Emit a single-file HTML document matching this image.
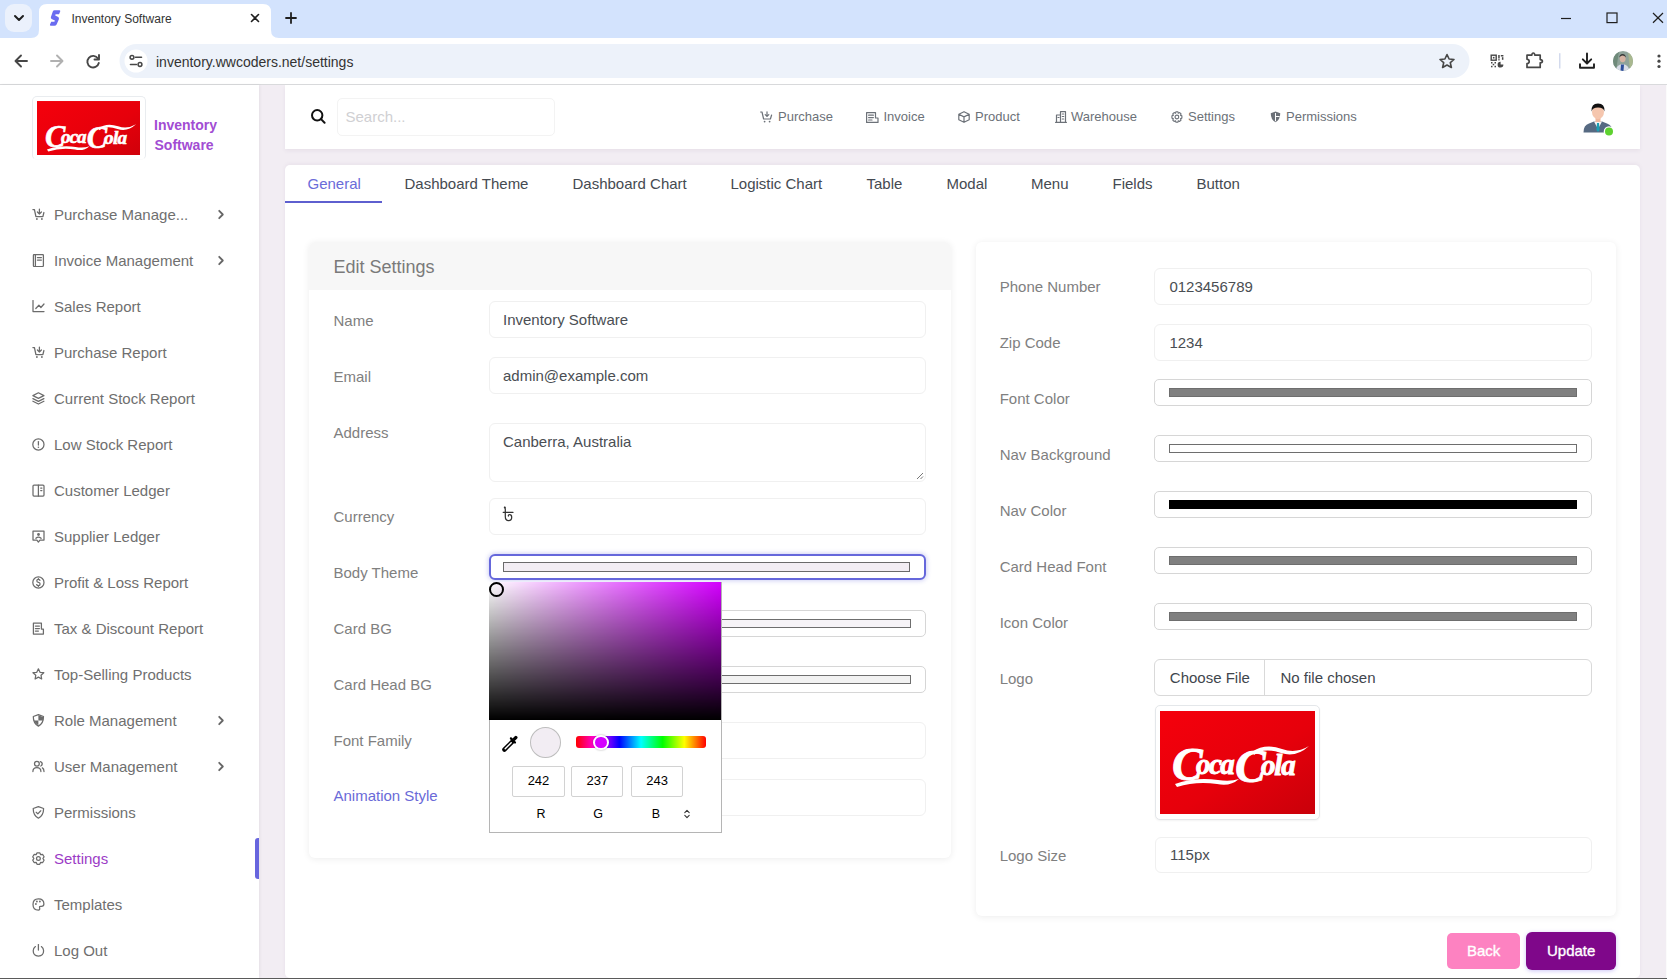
<!DOCTYPE html>
<html><head><meta charset="utf-8">
<style>
*{margin:0;padding:0;box-sizing:border-box}
html,body{width:1667px;height:979px;overflow:hidden;background:#fff;font-family:"Liberation Sans",sans-serif}
.a{position:absolute}
.t{position:absolute;white-space:nowrap}
/* chrome */
#strip{left:0;top:0;width:1667px;height:38px;background:#d3e3fd}
#toolbar{left:0;top:38px;width:1667px;height:46px;background:#fff}
#tbline{left:0;top:84px;width:1667px;height:1px;background:#d9dadc}
/* page */
#page{left:0;top:85px;width:1667px;height:893px;background:#f2edf3}
#side{left:0;top:85px;width:259px;height:893px;background:#fff;box-shadow:1px 0 3px rgba(0,0,0,.06)}
#botline{left:0;top:978px;width:1667px;height:1px;background:#5a5a5a}
.nav{position:absolute;left:0;width:259px;height:20px}
.nav .lb{position:absolute;left:54px;top:0;font-size:15px;line-height:15px;color:#6f6f6f;white-space:nowrap}
.nav svg{position:absolute;left:31px;top:0}
.nav .chev{position:absolute;left:216px;top:0}
.card{position:absolute;background:#fff;border-radius:6px}
.lbl{position:absolute;font-size:15px;line-height:15px;color:#808080;white-space:nowrap}
.inp{position:absolute;background:#fff;border:1px solid #f0f0f0;border-radius:6px}
.val{position:absolute;font-size:15px;line-height:15px;color:#4a4e53;white-space:nowrap}
.tab{position:absolute;top:176px;font-size:15px;line-height:15px;color:#454a51;white-space:nowrap}
.hn{position:absolute;top:110px;font-size:13px;line-height:13px;color:#6c7178;white-space:nowrap}
.cbar{position:absolute;border:1px solid #6e6e6e}
</style></head><body>
<svg width="0" height="0" style="position:absolute"><defs>
<linearGradient id="rg" x1="0" y1="0" x2="1" y2="1"><stop offset="0" stop-color="#f5000c"/><stop offset=".55" stop-color="#e6000b"/><stop offset="1" stop-color="#c9000a"/></linearGradient>
<symbol id="coke" viewBox="0 0 155 103">
<rect width="155" height="103" fill="url(#rg)"/>
<g fill="#fff" stroke="#fff" font-family="Liberation Serif" font-style="italic" font-weight="bold">
<text x="12" y="69" font-size="46" stroke-width="0.8">C</text>
<text x="36" y="63" font-size="29" stroke-width="0.9" letter-spacing="-1.5">oca</text>
<text x="75" y="71" font-size="46" stroke-width="0.8">C</text>
<text x="101" y="64" font-size="29" stroke-width="0.9" letter-spacing="-1.2">ola</text>
</g>
<path d="M15 73 Q35 66 58 69 Q70 71 79 68 Q70 76 57 73 Q36 70 17 76 Z" fill="#fff"/>
<path d="M92 41 Q105 32 122 38 Q136 43 149 35 Q136 47 121 42 Q104 36 94 44 Z" fill="#fff"/>
</symbol></defs></svg>

<!-- ============ CHROME ============ -->
<div id="strip" class="a"></div>
<div id="toolbar" class="a"></div>
<div id="tbline" class="a"></div>

<svg class="a" style="left:0;top:0" width="1667" height="85" viewBox="0 0 1667 85">
  <path d="M31 38 Q39 38 39 30 L39 12 Q39 4 47 4 L263 4 Q271 4 271 12 L271 30 Q271 38 279 38 Z" fill="#fff"/>
  <rect x="5" y="4" width="27" height="28" rx="9" fill="#ebf1fc"/>
  <path d="M15 16 L19 20 L23 16" fill="none" stroke="#1f1f1f" stroke-width="2" stroke-linecap="round" stroke-linejoin="round"/>
  <path d="M54.5 10.3 L59.6 10.3 Q60.6 10.5 60.2 11.6 L59 14.3 L55.6 14.3 L55.2 15.4 L58.2 17 Q59.4 17.8 58.8 19.4 L56.6 24.4 Q55.9 25.8 54.4 25.8 L50.6 25.8 Q49.6 25.6 50 24.6 L51.2 21.8 L54.4 21.8 L54.9 20.6 L51.6 19 Q50.4 18.2 51 16.8 L52.8 11.6 Q53.3 10.3 54.5 10.3 Z" fill="#6a6cf0"/>
  <path d="M251.5 14.5 L258.5 21.5 M258.5 14.5 L251.5 21.5" stroke="#1f1f1f" stroke-width="1.6" stroke-linecap="round"/>
  <path d="M291 13 L291 23 M286 18 L296 18" stroke="#1f1f1f" stroke-width="1.8" stroke-linecap="round"/>
  <!-- min max close -->
  <path d="M1561 18.5 L1571 18.5" stroke="#1f1f1f" stroke-width="1.2"/>
  <rect x="1607" y="13" width="10" height="9.6" fill="none" stroke="#1f1f1f" stroke-width="1.2"/>
  <path d="M1653 13 L1663 22.7 M1663 13 L1653 22.7" stroke="#1f1f1f" stroke-width="1.2"/>
  <!-- toolbar -->
  <path d="M27 61 L16 61 M21 55.5 L15.5 61 L21 66.5" fill="none" stroke="#474747" stroke-width="1.9" stroke-linecap="round" stroke-linejoin="round"/>
  <path d="M51 61 L62 61 M57 55.5 L62.5 61 L57 66.5" fill="none" stroke="#b1b1b1" stroke-width="1.9" stroke-linecap="round" stroke-linejoin="round"/>
  <path d="M98 58.5 A5.8 5.8 0 1 0 98.8 63" fill="none" stroke="#474747" stroke-width="1.9" stroke-linecap="round"/>
  <path d="M99 55 L99 59.5 L94.5 59.5" fill="none" stroke="#474747" stroke-width="1.9" stroke-linecap="round" stroke-linejoin="round"/>
  <rect x="119.5" y="44" width="1350" height="34" rx="17" fill="#edf2fa"/>
  <circle cx="136" cy="61" r="11.5" fill="#fff"/>
  <circle cx="132" cy="57.3" r="1.9" fill="none" stroke="#474747" stroke-width="1.5"/>
  <path d="M135.5 57.3 L141.5 57.3 M130.5 64.5 L136.5 64.5" stroke="#474747" stroke-width="1.6" stroke-linecap="round"/>
  <circle cx="140" cy="64.5" r="1.9" fill="none" stroke="#474747" stroke-width="1.5"/>
  <path d="M1447 54.5 L1449.1 59 L1454 59.5 L1450.3 62.7 L1451.4 67.5 L1447 65 L1442.6 67.5 L1443.7 62.7 L1440 59.5 L1444.9 59 Z" fill="none" stroke="#474747" stroke-width="1.6" stroke-linejoin="round"/>
  <!-- qr -->
  <g fill="#474747">
   <rect x="1491.2" y="55.2" width="5" height="5" fill="none" stroke="#474747" stroke-width="1.4"/>
   <rect x="1492.9" y="56.9" width="1.6" height="1.6"/>
   <rect x="1498.2" y="55" width="1.5" height="3.5"/><rect x="1500.8" y="55" width="2.6" height="1.5"/><rect x="1501.9" y="57.2" width="1.5" height="2.6"/><rect x="1498.2" y="59.2" width="1.5" height="1.2"/>
   <rect x="1491" y="62" width="1.5" height="1.5"/><rect x="1494.5" y="62" width="1.5" height="1.5"/><rect x="1492.7" y="63.8" width="1.5" height="1.5"/><rect x="1491" y="65.8" width="1.5" height="1.5"/><rect x="1494.5" y="65.8" width="1.5" height="1.5"/>
   <path d="M1500.6 61.8 L1500.6 64.6 L1503.4 64.6 A2.9 2.9 0 1 1 1500.6 61.8 Z"/>
  </g>
  <path d="M1527 55.2 L1531.8 55.2 Q1532 53 1533.3 53 Q1534.6 53 1534.8 55.2 L1540.2 55.2 L1540.2 59.6 Q1542.4 59.8 1542.4 61.2 Q1542.4 62.6 1540.2 62.8 L1540.2 67.4 L1527 67.4 L1527 63.6 Q1529.2 63.2 1529.2 61.4 Q1529.2 59.6 1527 59.2 Z" fill="none" stroke="#474747" stroke-width="1.7" stroke-linejoin="round"/>
  <rect x="1559.2" y="53.2" width="1.2" height="15.3" fill="#c9d1e9"/>
  <path d="M1587 53.5 L1587 63.2 M1582.8 59.3 L1587 63.5 L1591.2 59.3 M1580 64.2 L1580 67.8 L1594 67.8 L1594 64.2" fill="none" stroke="#1f1f1f" stroke-width="1.9" stroke-linecap="round" stroke-linejoin="round"/>
  <clipPath id="avc"><circle cx="1623" cy="61" r="10"/></clipPath>
  <g clip-path="url(#avc)">
   <rect x="1613" y="51" width="20" height="20" fill="#8fa39a"/>
   <path d="M1613 51 L1619 51 L1616 71 L1613 71 Z" fill="#6f8a7a"/>
   <path d="M1628 51 L1633 51 L1633 71 L1630 71 Z" fill="#a9b88f"/>
   <path d="M1615.5 71 Q1616.5 64.5 1622.5 64 Q1628.5 64.5 1629.5 71 Z" fill="#d9dde8"/>
   <path d="M1621 64.5 L1624 64.5 L1623.5 71 L1620.5 71 Z" fill="#2e4f9c"/>
   <ellipse cx="1622.6" cy="58.6" rx="3" ry="3.6" fill="#d6b3a3"/>
   <path d="M1619.4 57.5 Q1619.4 54 1622.6 54 Q1625.8 54 1625.8 57.5 Q1624.5 55.6 1622.6 55.6 Q1620.7 55.6 1619.4 57.5 Z" fill="#3a3a3a"/>
  </g>
  <circle cx="1659" cy="56" r="1.6" fill="#474747"/><circle cx="1659" cy="61.2" r="1.6" fill="#474747"/><circle cx="1659" cy="66.5" r="1.6" fill="#474747"/>
</svg>
<div class="t" style="left:71.5px;top:13px;font-size:12px;line-height:12px;color:#333">Inventory Software</div>
<div class="t" style="left:156px;top:54.5px;font-size:14px;line-height:14px;color:#333">inventory.wwcoders.net/settings</div>
<div id="page" class="a"></div>
<div id="side" class="a"></div>
<div class="a" style="left:31.5px;top:95.5px;width:114px;height:64px;border:1px solid #e9ecef;border-bottom-color:#fbfbfb;border-radius:5px;background:#fff"></div>
<div class="a" style="left:37px;top:101px;width:103px;height:54px;overflow:hidden"><svg class="a" style="left:0;top:0" width="103" height="68.5"><use href="#coke"/></svg></div>
<div class="t" style="left:154px;top:118px;font-size:14px;line-height:14px;font-weight:bold;color:#a24cd3">Inventory</div>
<div class="t" style="left:154.5px;top:137.8px;font-size:14px;line-height:14px;font-weight:bold;color:#a24cd3">Software</div>
<div class="nav" style="top:207.2px"><svg style="top:1.2px;left:31.6px" width="13" height="13" viewBox="0 0 12.2 13"><path d="M0.5 1.5 L2 1.5 L3.5 8.5 L10.5 8.5 L11.5 4.5" fill="none" stroke="#6b6b6b" stroke-width="1.25" stroke-linecap="round" stroke-linejoin="round"/><path d="M7 1 L7 6 M5 4 L7 6 L9 4" fill="none" stroke="#6b6b6b" stroke-width="1.25" stroke-linecap="round" stroke-linejoin="round"/><circle cx="4.5" cy="11" r=".9" fill="#6b6b6b"/><circle cx="9.5" cy="11" r=".9" fill="#6b6b6b"/></svg><div class="lb" style="color:#6f6f6f">Purchase Manage...</div><svg class="chev" style="left:217px;top:1.6px" width="8" height="11" viewBox="0 0 8 11"><path d="M2.2 1.8 L5.8 5.5 L2.2 9.2" fill="none" stroke="#666" stroke-width="1.8" stroke-linecap="round" stroke-linejoin="round"/></svg></div>
<div class="nav" style="top:253.2px"><svg style="top:1.2px;left:31.6px" width="13" height="13" viewBox="0 0 12.2 13"><rect x="1" y="0.5" width="10" height="12" rx="1" fill="none" stroke="#6b6b6b" stroke-width="1.25" stroke-linecap="round" stroke-linejoin="round"/><path d="M3 0.5 L3 12.5 M5 3.5 L9 3.5 M5 6 L9 6" fill="none" stroke="#6b6b6b" stroke-width="1.25" stroke-linecap="round" stroke-linejoin="round"/></svg><div class="lb" style="color:#6f6f6f">Invoice Management</div><svg class="chev" style="left:217px;top:1.6px" width="8" height="11" viewBox="0 0 8 11"><path d="M2.2 1.8 L5.8 5.5 L2.2 9.2" fill="none" stroke="#666" stroke-width="1.8" stroke-linecap="round" stroke-linejoin="round"/></svg></div>
<div class="nav" style="top:299.2px"><svg style="top:1.2px;left:31.6px" width="13" height="13" viewBox="0 0 12.2 13"><path d="M0.6 0.5 L0.6 11.5 L11.6 11.5" fill="none" stroke="#6b6b6b" stroke-width="1.25" stroke-linecap="round" stroke-linejoin="round"/><path d="M3.4 8.5 L6.5 5.2 L8.5 7.5 L11.6 4" fill="none" stroke="#6b6b6b" stroke-width="1.25" stroke-linecap="round" stroke-linejoin="round"/></svg><div class="lb" style="color:#6f6f6f">Sales Report</div></div>
<div class="nav" style="top:345.2px"><svg style="top:1.2px;left:31.6px" width="13" height="13" viewBox="0 0 12.2 13"><path d="M0.5 1.5 L2 1.5 L3.5 8.5 L10.5 8.5 L11.5 4.5" fill="none" stroke="#6b6b6b" stroke-width="1.25" stroke-linecap="round" stroke-linejoin="round"/><path d="M7 1 L7 6 M5 4 L7 6 L9 4" fill="none" stroke="#6b6b6b" stroke-width="1.25" stroke-linecap="round" stroke-linejoin="round"/><circle cx="4.5" cy="11" r=".9" fill="#6b6b6b"/><circle cx="9.5" cy="11" r=".9" fill="#6b6b6b"/></svg><div class="lb" style="color:#6f6f6f">Purchase Report</div></div>
<div class="nav" style="top:391.2px"><svg style="top:1.2px;left:31.6px" width="13" height="13" viewBox="0 0 12.2 13"><path d="M6 0.8 L11.5 3.6 L6 6.4 L0.5 3.6 Z" fill="none" stroke="#6b6b6b" stroke-width="1.25" stroke-linecap="round" stroke-linejoin="round"/><path d="M0.5 6.6 L6 9.4 L11.5 6.6 M0.5 9.2 L6 12 L11.5 9.2" fill="none" stroke="#6b6b6b" stroke-width="1.25" stroke-linecap="round" stroke-linejoin="round"/></svg><div class="lb" style="color:#6f6f6f">Current Stock Report</div></div>
<div class="nav" style="top:437.2px"><svg style="top:1.2px;left:31.6px" width="13" height="13" viewBox="0 0 12.2 13"><circle cx="6" cy="6.5" r="5.6" fill="none" stroke="#6b6b6b" stroke-width="1.25" stroke-linecap="round" stroke-linejoin="round"/><path d="M6 3.5 L6 7" fill="none" stroke="#6b6b6b" stroke-width="1.25" stroke-linecap="round" stroke-linejoin="round"/><circle cx="6" cy="9.2" r=".8" fill="#6b6b6b"/></svg><div class="lb" style="color:#6f6f6f">Low Stock Report</div></div>
<div class="nav" style="top:483.2px"><svg style="top:1.2px;left:31.6px" width="13" height="13" viewBox="0 0 12.2 13"><rect x="0.6" y="1" width="11" height="11" rx="1" fill="none" stroke="#6b6b6b" stroke-width="1.25" stroke-linecap="round" stroke-linejoin="round"/><path d="M6 1 L6 12 M8.3 4 L9.5 4 M8.3 6.5 L9.5 6.5" fill="none" stroke="#6b6b6b" stroke-width="1.25" stroke-linecap="round" stroke-linejoin="round"/></svg><div class="lb" style="color:#6f6f6f">Customer Ledger</div></div>
<div class="nav" style="top:529.2px"><svg style="top:1.2px;left:31.6px" width="13" height="13" viewBox="0 0 12.2 13"><path d="M0.6 1 L11.6 1 L11.6 10 L7.5 10 L6 12 L4.5 10 L0.6 10 Z" fill="none" stroke="#6b6b6b" stroke-width="1.25" stroke-linecap="round" stroke-linejoin="round"/><circle cx="6.1" cy="4.5" r="1.4" fill="#6b6b6b"/><path d="M3.5 8.3 Q6 5.8 8.7 8.3" fill="none" stroke="#6b6b6b" stroke-width="1.25" stroke-linecap="round" stroke-linejoin="round"/></svg><div class="lb" style="color:#6f6f6f">Supplier Ledger</div></div>
<div class="nav" style="top:575.2px"><svg style="top:1.2px;left:31.6px" width="13" height="13" viewBox="0 0 12.2 13"><circle cx="6" cy="6.5" r="5.6" fill="none" stroke="#6b6b6b" stroke-width="1.25" stroke-linecap="round" stroke-linejoin="round"/><path d="M7.6 4.3 Q7 3.4 6 3.4 Q4.4 3.4 4.4 4.8 Q4.4 6.2 6 6.4 Q7.7 6.6 7.7 8 Q7.7 9.6 6 9.6 Q4.8 9.6 4.3 8.6 M6 2.5 L6 3.4 M6 9.6 L6 10.5" fill="none" stroke="#6b6b6b" stroke-width="1.25" stroke-linecap="round" stroke-linejoin="round" stroke-width="1.1"/></svg><div class="lb" style="color:#6f6f6f">Profit &amp; Loss Report</div></div>
<div class="nav" style="top:621.2px"><svg style="top:1.2px;left:31.6px" width="13" height="13" viewBox="0 0 12.2 13"><path d="M9 4 L9 1 L1 1 L1 12 L11 12 L11 7 L9 7 Z" fill="none" stroke="#6b6b6b" stroke-width="1.25" stroke-linecap="round" stroke-linejoin="round"/><path d="M3 4 L7 4 M3 6.5 L7 6.5 M3 9 L6 9" fill="none" stroke="#6b6b6b" stroke-width="1.25" stroke-linecap="round" stroke-linejoin="round"/></svg><div class="lb" style="color:#6f6f6f">Tax &amp; Discount Report</div></div>
<div class="nav" style="top:667.2px"><svg style="top:1.2px;left:31.6px" width="13" height="13" viewBox="0 0 12.2 13"><path d="M6 0.8 L7.6 4.3 L11.4 4.7 L8.6 7.2 L9.3 11 L6 9.1 L2.7 11 L3.4 7.2 L0.6 4.7 L4.4 4.3 Z" fill="none" stroke="#6b6b6b" stroke-width="1.25" stroke-linecap="round" stroke-linejoin="round"/></svg><div class="lb" style="color:#6f6f6f">Top-Selling Products</div></div>
<div class="nav" style="top:713.2px"><svg style="top:1.2px;left:31.6px" width="13" height="13" viewBox="0 0 12.2 13"><path d="M6 0.7 L11.1 2.5 Q11.2 9.3 6 12.1 Q0.8 9.3 0.9 2.5 Z" fill="none" stroke="#6b6b6b" stroke-width="1.25" stroke-linecap="round" stroke-linejoin="round"/><path d="M6 1.2 L10.6 2.9 Q10.7 4.9 10.3 6.4 L6 6.4 Z" fill="#6b6b6b"/><path d="M1.6 6.4 L6 6.4 L6 11.5 Q2.6 9.6 1.6 6.4 Z" fill="#6b6b6b"/></svg><div class="lb" style="color:#6f6f6f">Role Management</div><svg class="chev" style="left:217px;top:1.6px" width="8" height="11" viewBox="0 0 8 11"><path d="M2.2 1.8 L5.8 5.5 L2.2 9.2" fill="none" stroke="#666" stroke-width="1.8" stroke-linecap="round" stroke-linejoin="round"/></svg></div>
<div class="nav" style="top:759.2px"><svg style="top:1.2px;left:31.6px" width="13" height="13" viewBox="0 0 12.2 13"><circle cx="4.5" cy="3.8" r="2.4" fill="none" stroke="#6b6b6b" stroke-width="1.25" stroke-linecap="round" stroke-linejoin="round"/><path d="M0.5 11.5 Q0.5 7.5 4.5 7.5 Q8.5 7.5 8.5 11.5" fill="none" stroke="#6b6b6b" stroke-width="1.25" stroke-linecap="round" stroke-linejoin="round"/><path d="M8 1.6 Q10 2.2 9.8 4.2 Q9.6 5.6 8.4 6 M10 7.9 Q11.6 8.8 11.6 11.5" fill="none" stroke="#6b6b6b" stroke-width="1.25" stroke-linecap="round" stroke-linejoin="round"/></svg><div class="lb" style="color:#6f6f6f">User Management</div><svg class="chev" style="left:217px;top:1.6px" width="8" height="11" viewBox="0 0 8 11"><path d="M2.2 1.8 L5.8 5.5 L2.2 9.2" fill="none" stroke="#666" stroke-width="1.8" stroke-linecap="round" stroke-linejoin="round"/></svg></div>
<div class="nav" style="top:805.2px"><svg style="top:1.2px;left:31.6px" width="13" height="13" viewBox="0 0 12.2 13"><path d="M6 0.6 L11.2 2.5 Q11.2 9.5 6 12.2 Q0.8 9.5 0.8 2.5 Z" fill="none" stroke="#6b6b6b" stroke-width="1.25" stroke-linecap="round" stroke-linejoin="round"/><path d="M3.8 6.3 L5.4 7.9 L8.4 4.8" fill="none" stroke="#6b6b6b" stroke-width="1.25" stroke-linecap="round" stroke-linejoin="round"/></svg><div class="lb" style="color:#6f6f6f">Permissions</div></div>
<div class="nav" style="top:851.2px"><svg style="top:1.2px;left:31.6px" width="13" height="13" viewBox="0 0 12.2 13"><circle cx="6" cy="6.5" r="1.9" fill="none" stroke="#6b6b6b" stroke-width="1.25" stroke-linecap="round" stroke-linejoin="round"/><path d="M3.75 2.60 L4.67 0.75 L7.33 0.75 L8.25 2.60 L10.31 2.48 L11.64 4.78 L10.50 6.50 L11.64 8.22 L10.31 10.52 L8.25 10.40 L7.33 12.25 L4.67 12.25 L3.75 10.40 L1.69 10.52 L0.36 8.22 L1.50 6.50 L0.36 4.78 L1.69 2.48 Z" fill="none" stroke="#6b6b6b" stroke-width="1.25" stroke-linecap="round" stroke-linejoin="round"/></svg><div class="lb" style="color:#9c3cc6">Settings</div></div>
<div class="nav" style="top:897.2px"><svg style="top:1.2px;left:31.6px" width="13" height="13" viewBox="0 0 12.2 13"><path d="M6 0.8 Q11.5 0.8 11.5 6 Q11.5 8.4 9 8.4 L8 8.4 Q6.8 8.4 7.2 9.6 Q7.8 12 6 12 Q0.6 12 0.6 6.4 Q0.6 0.8 6 0.8 Z" fill="none" stroke="#6b6b6b" stroke-width="1.25" stroke-linecap="round" stroke-linejoin="round"/><circle cx="3.5" cy="6" r=".9" fill="#6b6b6b"/><circle cx="4.5" cy="3.5" r=".9" fill="#6b6b6b"/><circle cx="7.5" cy="3.5" r=".9" fill="#6b6b6b"/></svg><div class="lb" style="color:#6f6f6f">Templates</div></div>
<div class="nav" style="top:943.2px"><svg style="top:1.2px;left:31.6px" width="13" height="13" viewBox="0 0 12.2 13"><path d="M6 0.6 L6 6" fill="none" stroke="#6b6b6b" stroke-width="1.25" stroke-linecap="round" stroke-linejoin="round"/><path d="M3 2.6 Q0.8 4.2 0.8 6.8 Q0.8 12 6 12 Q11.2 12 11.2 6.8 Q11.2 4.2 9 2.6" fill="none" stroke="#6b6b6b" stroke-width="1.25" stroke-linecap="round" stroke-linejoin="round"/></svg><div class="lb" style="color:#6f6f6f">Log Out</div></div>
<div class="a" style="left:255px;top:838px;width:4px;height:41px;background:#6765de;border-radius:3px 0 0 3px"></div>

<!-- header card -->
<div class="a" style="left:285px;top:85px;width:1355px;height:64px;background:#fff;box-shadow:0 2px 4px rgba(60,40,80,.06)"></div>
<svg class="a" style="left:309px;top:107px" width="18" height="18" viewBox="0 0 18 18"><circle cx="8.2" cy="8.3" r="5.2" fill="none" stroke="#111" stroke-width="2"/><path d="M12 12.1 L15.6 15.7" stroke="#111" stroke-width="2" stroke-linecap="round"/></svg>
<div class="a" style="left:337px;top:98px;width:218px;height:38px;border:1px solid #f3f3f3;border-radius:5px;background:#fff"></div>
<div class="t" style="left:345.5px;top:109px;font-size:15px;line-height:15px;color:#d0d0d3">Search...</div>
<svg class="a" style="left:760px;top:111px" width="13" height="12" viewBox="0 0 13 12"><path d="M0.6 1 L2 1 L3.6 8 L10.4 8 L11.6 4" fill="none" stroke="#6c7178" stroke-width="1.2" stroke-linecap="round" stroke-linejoin="round"/><path d="M7 0.8 L7 5.4 M5.2 3.6 L7 5.4 L8.8 3.6" fill="none" stroke="#6c7178" stroke-width="1.2" stroke-linecap="round" stroke-linejoin="round"/><circle cx="4.6" cy="10.6" r=".9" fill="#6c7178"/><circle cx="9.6" cy="10.6" r=".9" fill="#6c7178"/></svg>
<div class="hn" style="left:778px">Purchase</div>
<svg class="a" style="left:866px;top:112px" width="13" height="11" viewBox="0 0 13 11"><path d="M9.5 4 L9.5 0.6 L0.6 0.6 L0.6 10.4 L12 10.4 L12 6 L9.5 6 Z" fill="none" stroke="#6c7178" stroke-width="1.2" stroke-linecap="round" stroke-linejoin="round"/><path d="M2.6 3.2 L7.4 3.2 M2.6 5.6 L7.4 5.6 M2.6 8 L6 8" fill="none" stroke="#6c7178" stroke-width="1.2" stroke-linecap="round" stroke-linejoin="round"/></svg>
<div class="hn" style="left:883.5px">Invoice</div>
<svg class="a" style="left:958px;top:111px" width="12" height="12" viewBox="0 0 12 12"><path d="M6 0.7 L11.2 3.3 L11.2 8.7 L6 11.3 L0.8 8.7 L0.8 3.3 Z M0.8 3.3 L6 5.9 L11.2 3.3 M6 5.9 L6 11.3" fill="none" stroke="#6c7178" stroke-width="1.2" stroke-linecap="round" stroke-linejoin="round"/></svg>
<div class="hn" style="left:975px">Product</div>
<svg class="a" style="left:1055px;top:111px" width="12" height="12" viewBox="0 0 12 12"><path d="M1.5 11.4 L1.5 4 L5.5 4 L5.5 11.4 M5.5 11.4 L5.5 0.7 L10.5 0.7 L10.5 11.4 Z M0.6 11.4 L11.4 11.4 M7.3 3 L8.7 3 M7.3 5.5 L8.7 5.5 M7.3 8 L8.7 8 M3 6.5 L4 6.5" fill="none" stroke="#6c7178" stroke-width="1.2" stroke-linecap="round" stroke-linejoin="round"/></svg>
<div class="hn" style="left:1071px">Warehouse</div>
<svg class="a" style="left:1171px;top:111px" width="12" height="12" viewBox="0 0 12.2 13"><circle cx="6" cy="6.5" r="2" fill="none" stroke="#6c7178" stroke-width="1.2" stroke-linecap="round" stroke-linejoin="round"/><path d="M5 0.8 L7 0.8 L7.5 2.4 L9 1.7 L10.5 3.2 L9.8 4.7 L11.4 5.3 L11.4 7.7 L9.8 8.3 L10.5 9.8 L9 11.3 L7.5 10.6 L7 12.2 L5 12.2 L4.5 10.6 L3 11.3 L1.5 9.8 L2.2 8.3 L0.6 7.7 L0.6 5.3 L2.2 4.7 L1.5 3.2 L3 1.7 L4.5 2.4 Z" fill="none" stroke="#6c7178" stroke-width="1.2" stroke-linecap="round" stroke-linejoin="round"/></svg>
<div class="hn" style="left:1188px">Settings</div>
<svg class="a" style="left:1270px;top:111px" width="11" height="12" viewBox="0 0 12 13"><path d="M6 0.6 L11.2 2.5 Q11.2 9.5 6 12.2 Q0.8 9.5 0.8 2.5 Z" fill="#6c7178"/><path d="M6 2 L6 11 M6.5 6 L10.5 6" stroke="#fff" stroke-width="1.1"/></svg>
<div class="hn" style="left:1286px">Permissions</div>
<!-- avatar -->
<svg class="a" style="left:1580px;top:100px" width="36" height="38" viewBox="0 0 36 38">
 <path d="M3.5 32.5 Q3.5 25 9 23.5 L14 21.5 L22 21.5 L27 23.5 Q32.5 25 32.5 32.5 Z" fill="#566a82"/>
 <path d="M14 21.5 L18 29 L22 21.5 Z" fill="#f4f4f4"/>
 <path d="M17 23 L19 23 L19.6 30 L18 32 L16.4 30 Z" fill="#1ba0b5"/>
 <rect x="15.5" y="17" width="5" height="5" fill="#f0b9a0"/>
 <ellipse cx="18" cy="12" rx="6" ry="7.2" fill="#f5c6ae"/>
 <path d="M11.5 11.5 Q11 3.5 18 3.5 Q25 3.5 24.5 11.5 Q23.5 7.5 18 7.5 Q12.5 7.5 11.5 11.5 Z" fill="#111"/>
 <circle cx="29" cy="31.5" r="5.3" fill="#fff"/>
 <circle cx="29" cy="31.5" r="4" fill="#5ed12f"/>
</svg>

<!-- tab card -->
<div class="card" style="left:285px;top:165px;width:1355px;height:813px;border-radius:5px;box-shadow:0 -1px 4px rgba(60,40,80,.06)"></div>
<div class="tab" style="left:307.5px;color:#6a6cd9">General</div>
<div class="tab" style="left:404.5px">Dashboard Theme</div>
<div class="tab" style="left:572.5px">Dashboard Chart</div>
<div class="tab" style="left:730.5px">Logistic Chart</div>
<div class="tab" style="left:866.5px">Table</div>
<div class="tab" style="left:946.5px">Modal</div>
<div class="tab" style="left:1031px">Menu</div>
<div class="tab" style="left:1112.5px">Fields</div>
<div class="tab" style="left:1196.5px">Button</div>
<div class="a" style="left:285px;top:201px;width:97px;height:2px;background:#5e5fcf"></div>
<div class="card" style="left:308.5px;top:242px;width:642.5px;height:616px;box-shadow:0 1px 7px rgba(0,0,0,.08);overflow:hidden"><div class="a" style="left:0;top:0;width:100%;height:48px;background:#f7f7f7"></div></div>
<div class="t" style="left:333.5px;top:258px;font-size:18px;line-height:18px;color:#7a7a7a">Edit Settings</div>
<div class="lbl" style="left:333.5px;top:312.5px">Name</div>
<div class="inp" style="left:488.5px;top:301.2px;width:437.20000000000005px;height:37.10000000000002px;"></div>
<div class="val" style="left:503px;top:312.3px">Inventory Software</div>
<div class="lbl" style="left:333.5px;top:368.5px">Email</div>
<div class="inp" style="left:488.5px;top:357.3px;width:437.20000000000005px;height:37.099999999999966px;"></div>
<div class="val" style="left:503px;top:368.3px">admin@example.com</div>
<div class="lbl" style="left:333.5px;top:424.5px">Address</div>
<div class="inp" style="left:488.5px;top:423.3px;width:437.20000000000005px;height:58.39999999999998px;"></div>
<div class="val" style="left:503px;top:434.0px">Canberra, Australia</div>
<svg class="a" style="left:916px;top:472px" width="8" height="8" viewBox="0 0 8 8"><path d="M7 1 L1 7 M7 4.5 L4.5 7" stroke="#777" stroke-width="1"/></svg>
<div class="lbl" style="left:333.5px;top:508.7px">Currency</div>
<div class="inp" style="left:488.5px;top:498.3px;width:437.20000000000005px;height:37.099999999999966px;"></div>
<svg class="a" style="left:502px;top:506px" width="14" height="16" viewBox="0 0 14 16"><path d="M2.6 1.4 Q3.3 2 3.3 3.4 L3.3 10.6 Q3.3 14.7 6.6 14.7 Q9.7 14.7 9.7 11.3 Q9.7 8.6 7.6 8.6 Q6.2 8.6 6.4 10" fill="none" stroke="#333" stroke-width="1.25" stroke-linecap="round"/><circle cx="2.8" cy="1.6" r="1" fill="#333"/><path d="M1.2 6.4 L11 6.4" stroke="#333" stroke-width="1.1" stroke-linecap="round"/></svg>
<div class="lbl" style="left:333.5px;top:564.5px">Body Theme</div>
<div class="a" style="left:488.5px;top:554.4px;width:437.2px;height:25.6px;border:2px solid #6567db;border-radius:6px;background:#fff;box-shadow:0 0 4px 1px rgba(101,103,219,.3)"></div>
<div class="cbar" style="left:503px;top:562px;width:407.0px;height:10px;background:#f2edf3;border-color:#6a6a6a"></div>
<div class="lbl" style="left:333.5px;top:620.5px">Card BG</div>
<div class="inp" style="left:488.5px;top:610.3px;width:437.20000000000005px;height:26.6px;border-color:#d6d6d6;border-radius:5px"></div><div class="cbar" style="left:503.5px;top:618.6px;width:407.2px;height:9.6px;background:#f6f3f7;border-color:#6e6e6e"></div>
<div class="lbl" style="left:333.5px;top:676.5px">Card Head BG</div>
<div class="inp" style="left:488.5px;top:666.3px;width:437.20000000000005px;height:26.6px;border-color:#d6d6d6;border-radius:5px"></div><div class="cbar" style="left:503.5px;top:674.6px;width:407.2px;height:9.6px;background:#f2f2f2;border-color:#6e6e6e"></div>
<div class="lbl" style="left:333.5px;top:732.5px">Font Family</div>
<div class="inp" style="left:488.5px;top:722.2px;width:437.20000000000005px;height:37.19999999999993px;"></div>
<div class="lbl" style="left:333.5px;top:788.0px;color:#6a6ad8">Animation Style</div>
<div class="inp" style="left:488.5px;top:778.5px;width:437.20000000000005px;height:37.0px;"></div>
<div class="card" style="left:975.5px;top:242px;width:640.5px;height:674px;box-shadow:0 1px 7px rgba(0,0,0,.08)"></div>
<div class="lbl" style="left:999.7px;top:279.3px">Phone Number</div>
<div class="inp" style="left:1154.2px;top:267.5px;width:437.5999999999999px;height:37.19999999999999px;"></div>
<div class="val" style="left:1169.4px;top:278.7px">0123456789</div>
<div class="lbl" style="left:999.7px;top:335.3px">Zip Code</div>
<div class="inp" style="left:1154.2px;top:323.5px;width:437.5999999999999px;height:37.19999999999999px;"></div>
<div class="val" style="left:1169.4px;top:334.7px">1234</div>
<div class="lbl" style="left:999.7px;top:391.3px">Font Color</div>
<div class="inp" style="left:1154.2px;top:379.2px;width:437.5999999999999px;height:26.6px;border-color:#d6d6d6;border-radius:5px"></div><div class="cbar" style="left:1169.2px;top:387.9px;width:407.6px;height:9.6px;background:#808080;border-color:#6e6e6e"></div>
<div class="lbl" style="left:999.7px;top:447.3px">Nav Background</div>
<div class="inp" style="left:1154.2px;top:435.0px;width:437.5999999999999px;height:26.6px;border-color:#d6d6d6;border-radius:5px"></div><div class="cbar" style="left:1169.2px;top:443.7px;width:407.6px;height:9.6px;background:#ffffff;border-color:#6e6e6e"></div>
<div class="lbl" style="left:999.7px;top:503.3px">Nav Color</div>
<div class="inp" style="left:1154.2px;top:491.0px;width:437.5999999999999px;height:26.6px;border-color:#d6d6d6;border-radius:5px"></div><div class="cbar" style="left:1169.2px;top:499.7px;width:407.6px;height:9.6px;background:#000000;border-color:#000"></div>
<div class="lbl" style="left:999.7px;top:559.3px">Card Head Font</div>
<div class="inp" style="left:1154.2px;top:547.0px;width:437.5999999999999px;height:26.6px;border-color:#d6d6d6;border-radius:5px"></div><div class="cbar" style="left:1169.2px;top:555.7px;width:407.6px;height:9.6px;background:#808080;border-color:#6e6e6e"></div>
<div class="lbl" style="left:999.7px;top:615.3px">Icon Color</div>
<div class="inp" style="left:1154.2px;top:603.0px;width:437.5999999999999px;height:26.6px;border-color:#d6d6d6;border-radius:5px"></div><div class="cbar" style="left:1169.2px;top:611.7px;width:407.6px;height:9.6px;background:#808080;border-color:#6e6e6e"></div>
<div class="lbl" style="left:999.7px;top:671.3px">Logo</div>
<div class="inp" style="left:1154.2px;top:659.2px;width:437.6px;height:37.2px;border-color:#d9d9d9;border-radius:6px"></div>
<div class="a" style="left:1264px;top:660px;width:1px;height:36px;background:#d9d9d9"></div>
<div class="val" style="left:1169.8px;top:669.8px;color:#3f464d">Choose File</div>
<div class="val" style="left:1280.5px;top:669.8px;color:#3f464d">No file chosen</div>
<div class="a" style="left:1154.5px;top:705px;width:165.5px;height:114.5px;border:1px solid #e4e7ea;border-radius:5px;background:#fff;box-shadow:0 1px 2px rgba(0,0,0,.05)"></div>
<svg class="a" style="left:1160px;top:711px" width="155" height="103"><use href="#coke"/></svg>
<div class="lbl" style="left:999.7px;top:847.5px">Logo Size</div>
<div class="inp" style="left:1155px;top:836.6px;width:436.79999999999995px;height:36.39999999999998px;"></div>
<div class="val" style="left:1170px;top:846.8px">115px</div>
<div class="a" style="left:1447px;top:933px;width:72.7px;height:35.5px;background:#fd82c1;border-radius:5px"></div>
<div class="t" style="left:1467px;top:943px;font-size:15px;line-height:15px;color:#fff;-webkit-text-stroke:0.35px #fff">Back</div>
<div class="a" style="left:1526px;top:932px;width:89.8px;height:37.5px;background:#7f078a;border-radius:6px;box-shadow:0 1px 4px rgba(110,90,230,.35)"></div>
<div class="t" style="left:1547px;top:943px;font-size:15px;line-height:15px;color:#fff;-webkit-text-stroke:0.35px #fff">Update</div>
<!-- color picker popup -->
<div class="a" style="left:488.5px;top:581.7px;width:233.3px;height:251px;background:#fff;border:1px solid #b5b5b5;border-top:none"></div>
<div class="a" style="left:489px;top:581.7px;width:232px;height:138.6px;background:linear-gradient(to top,#000,rgba(0,0,0,0)),linear-gradient(to right,#fff,#d400ff)"></div>
<div class="a" style="left:489.2px;top:581.5px;width:15px;height:15px;border:2.5px solid #000;border-radius:50%"></div>
<svg class="a" style="left:500px;top:733px" width="20" height="20" viewBox="0 0 20 20">
 <path d="M12.3 5.7 L14.8 3.2 Q15.8 2.3 16.8 3.2 L17.2 3.6 Q18.1 4.6 17.2 5.6 L14.7 8.1 Z" fill="#000"/>
 <path d="M10.9 5.4 L15 9.5" stroke="#000" stroke-width="2.2" stroke-linecap="round"/>
 <path d="M12.4 8.6 L4.4 16.6" stroke="#000" stroke-width="4.4" stroke-linecap="round"/>
 <path d="M11.2 9.8 L5.2 15.8" stroke="#fff" stroke-width="1.5" stroke-linecap="round"/>
</svg>
<div class="a" style="left:530.3px;top:727px;width:31.2px;height:31.3px;border:1px solid #bdbdbd;border-radius:50%;background:#f2edf3"></div>
<div class="a" style="left:576px;top:736px;width:130.2px;height:12px;border-radius:3px;background:linear-gradient(to right,#ff0000 0%,#ff00ff 16.67%,#0000ff 33.33%,#00ffff 50%,#00ff00 66.67%,#ffff00 83.33%,#ff0000 100%)"></div>
<div class="a" style="left:593.2px;top:734.5px;width:15.5px;height:15.5px;border-radius:50%;background:#d400ff;border:2px solid #fff;box-shadow:0 0 2px rgba(0,0,0,.35)"></div>
<div class="a" style="left:512.3px;top:765.5px;width:52.4px;height:31.2px;border:1px solid #d2d2d2;border-radius:2px"></div>
<div class="a" style="left:571.3px;top:765.5px;width:52.2px;height:31.2px;border:1px solid #d2d2d2;border-radius:2px"></div>
<div class="a" style="left:631.3px;top:765.5px;width:51.5px;height:31.2px;border:1px solid #d2d2d2;border-radius:2px"></div>
<div class="t" style="left:512.3px;top:774.3px;width:52.4px;text-align:center;font-size:13px;line-height:13px;color:#000">242</div>
<div class="t" style="left:571.3px;top:774.3px;width:52.2px;text-align:center;font-size:13px;line-height:13px;color:#000">237</div>
<div class="t" style="left:631.3px;top:774.3px;width:51.5px;text-align:center;font-size:13px;line-height:13px;color:#000">243</div>
<div class="t" style="left:520px;top:807.5px;width:42px;text-align:center;font-size:12.5px;line-height:12.5px;color:#000">R</div>
<div class="t" style="left:577px;top:807.5px;width:42px;text-align:center;font-size:12.5px;line-height:12.5px;color:#000">G</div>
<div class="t" style="left:635px;top:807.5px;width:42px;text-align:center;font-size:12.5px;line-height:12.5px;color:#000">B</div>
<svg class="a" style="left:683px;top:809px" width="8" height="10" viewBox="0 0 8 10"><path d="M1.8 3.6 L4 1.4 L6.2 3.6 M1.8 6.4 L4 8.6 L6.2 6.4" fill="none" stroke="#333" stroke-width="1.1" stroke-linecap="round" stroke-linejoin="round"/></svg>

<div class="a" style="left:1666px;top:85px;width:1px;height:893px;background:#fbfbfb"></div>
<div id="botline" class="a"></div>
</body></html>
